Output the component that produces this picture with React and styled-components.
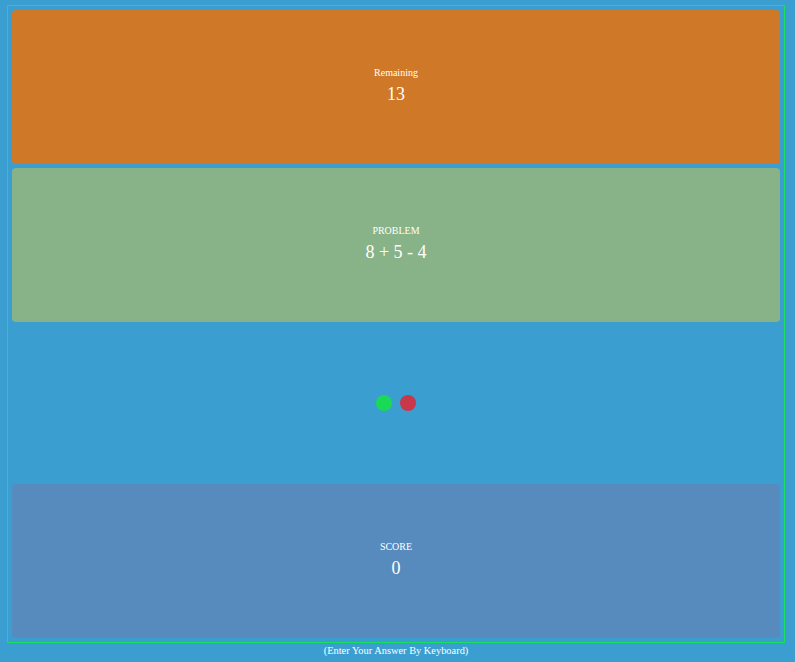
import React, { useState } from 'react'
import styled, { createGlobalStyle } from 'styled-components'

const GlobalStyle = createGlobalStyle`
    html, body {
        margin: 0;
        padding: 0;
        background: #3a9fd0;
        font-family: "Liberation Serif", "Times New Roman", serif;
        color: #ffffff;
    }
`

const Page = styled.div`
    padding: 5px 0 0 7px;
`

const Board = styled.div`
    width: 778px;
    box-sizing: border-box;
    border: 1px solid #19e05a;
    padding: 4px;
    display: flex;
    flex-direction: column;
    gap: 4px;
`

const Panel = styled.div`
    height: 154px;
    border-radius: 4px;
    background: ${props => props.color || 'transparent'};
    display: flex;
    flex-direction: column;
    align-items: center;
    justify-content: center;
`

const Label = styled.div`
    font-size: 10px;
    line-height: 12px;
    margin-top: -3px;
`

const Value = styled.div`
    font-size: 18px;
    line-height: 22px;
    margin-top: 4px;
`

const Lights = styled.div`
    display: flex;
    gap: 8px;
    margin-top: -1px;
`

const Light = styled.span`
    width: 16px;
    height: 16px;
    border-radius: 50%;
    background: ${props => props.color};
`

const Hint = styled.div`
    text-align: center;
    font-size: 10.4px;
    line-height: 12px;
    margin-top: 2px;
    width: 778px;
`

function App() {
    const [remaining] = useState(13)
    const [score] = useState(0)
    const problem = '8 + 5 - 4'

    return (
        <Page>
            <GlobalStyle />
            <Board>
                <Panel color="#cf7828">
                    <Label>Remaining</Label>
                    <Value>{remaining}</Value>
                </Panel>
                <Panel color="#88b288">
                    <Label>PROBLEM</Label>
                    <Value>{problem}</Value>
                </Panel>
                <Panel>
                    <Lights>
                        <Light color="#1ad954" />
                        <Light color="#c8374a" />
                    </Lights>
                </Panel>
                <Panel color="#578bbd">
                    <Label>SCORE</Label>
                    <Value>{score}</Value>
                </Panel>
            </Board>
            <Hint>(Enter Your Answer By Keyboard)</Hint>
        </Page>
    )
}

export default App
